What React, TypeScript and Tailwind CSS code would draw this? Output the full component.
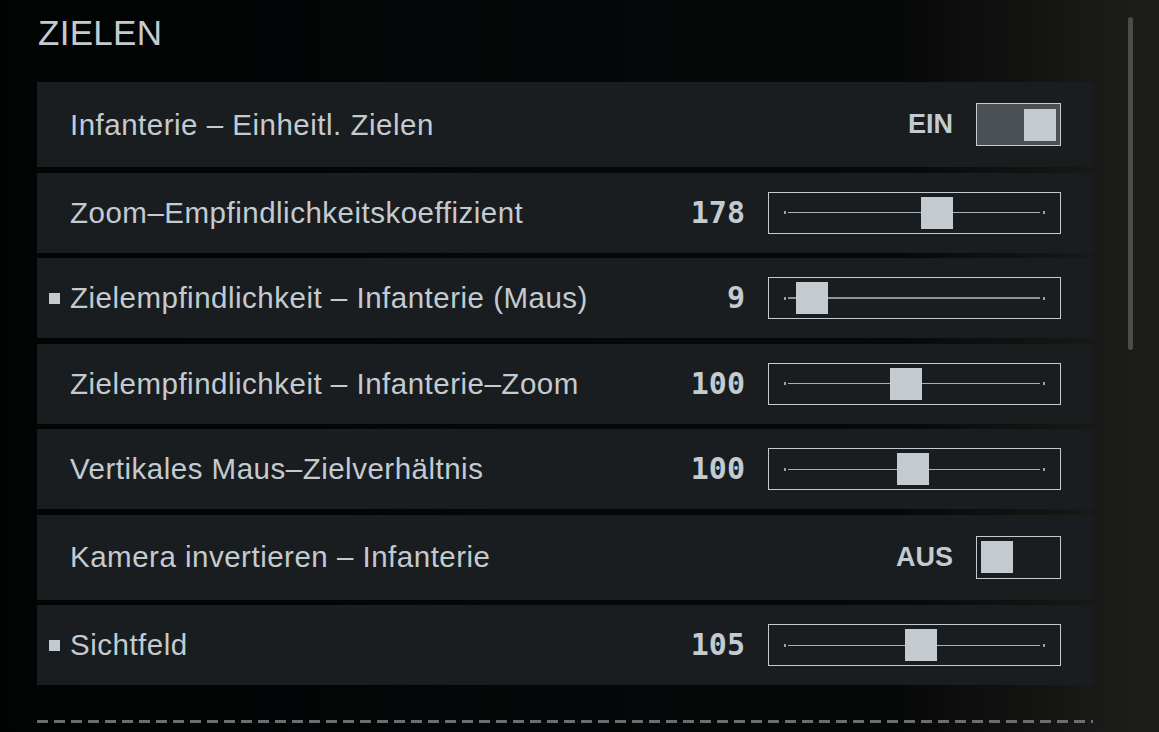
import React from 'react';

type Row =
  | { kind: 'toggle'; label: string; on: boolean; marked?: boolean }
  | { kind: 'slider'; label: string; value: number; thumb: number; marked?: boolean; active?: boolean };

const rows: Row[] = [
  { kind: 'toggle', label: 'Infanterie – Einheitl. Zielen', on: true },
  { kind: 'slider', label: 'Zoom–Empfindlichkeitskoeffizient', value: 178, thumb: 152 },
  { kind: 'slider', label: 'Zielempfindlichkeit – Infanterie (Maus)', value: 9, thumb: 27, marked: true, active: true },
  { kind: 'slider', label: 'Zielempfindlichkeit – Infanterie–Zoom', value: 100, thumb: 121 },
  { kind: 'slider', label: 'Vertikales Maus–Zielverhältnis', value: 100, thumb: 128 },
  { kind: 'toggle', label: 'Kamera invertieren – Infanterie', on: false },
  { kind: 'slider', label: 'Sichtfeld', value: 105, thumb: 136, marked: true },
];

const sans = { fontFamily: '"Liberation Sans", Arial, sans-serif' };

const Toggle: React.FC<{ on: boolean }> = ({ on }) => (
  <div className="flex items-center gap-[23px]">
    <span className="text-[27px] font-bold text-[#c3cbd1] leading-none">{on ? 'EIN' : 'AUS'}</span>
    <div
      className={`flex h-[43px] w-[85px] items-center border border-[#c3cbd1] px-[4px] ${
        on ? 'justify-end bg-[#4a5054]' : 'justify-start'
      }`}
    >
      <div className="h-[32px] w-[32px] bg-[#c3cbd1]" />
    </div>
  </div>
);

const Slider: React.FC<{ value: number; thumb: number; active?: boolean }> = ({ value, thumb, active }) => (
  <div className="flex items-center gap-[23px]">
    <span
      className="text-[30px] font-bold text-[#c3cbd1] leading-none"
      style={{ fontFamily: '"DejaVu Sans Mono", monospace' }}
    >
      {value}
    </span>
    <div className="relative flex h-[42px] w-[293px] items-center border border-[#c3cbd1] pl-[15px]">
      <div className="h-[3px] w-[2px] bg-[#9aa0a4]" />
      <div className={`ml-[2px] w-[252px] ${active ? 'h-[2px] bg-[#8d9397]' : 'h-px bg-[#a9b0b4]'}`} />
      <div className="ml-[3px] h-[3px] w-[2px] bg-[#9aa0a4]" />
      {/* thumb sits over the track */}
      <div className="absolute top-[4px] h-[32px] w-[32px] bg-[#c3cbd1]" style={{ left: thumb }} />
    </div>
  </div>
);

const App: React.FC = () => {
  return (
    <div
      className="relative h-[732px] w-[1159px] overflow-hidden text-[#c3cbd1]"
      style={{
        ...sans,
        background:
          'linear-gradient(90deg, #020303 0%, #050607 45%, #070808 78%, #121311 88%, #1b1b19 96%, #1d1d1b 100%)',
      }}
    >
      <div className="flex w-[1056px] flex-col pl-[37px] pt-[15px] box-content">
        <h1 className="pl-[1px] text-[35px] leading-[35px] tracking-[0.3px] text-[#c3cbd1]">ZIELEN</h1>

        <div className="mt-[32px] flex flex-col gap-[5.5px]">
          {rows.map((row, i) => (
            <div
              key={i}
              className={`flex items-center justify-between bg-[#1a1d20] pl-[12px] pr-[32px] ${
                row.kind === 'toggle' ? 'h-[85px]' : 'h-[80px]'
              }`}
            >
              <div className="flex items-center">
                <div className="flex w-[21px] items-center">
                  {row.marked && <div className="h-[11px] w-[11px] bg-[#c3cbd1]" />}
                </div>
                <span className="text-[29.5px] leading-none tracking-[0.5px] text-[#c3cbd1]">{row.label}</span>
              </div>
              {row.kind === 'toggle' ? (
                <Toggle on={row.on} />
              ) : (
                <Slider value={row.value} thumb={row.thumb} active={row.active} />
              )}
            </div>
          ))}
        </div>

        <div className="mt-[35px] flex w-[1056px] gap-[6px] overflow-hidden">
          {Array.from({ length: 70 }).map((_, i) => (
            <div key={i} className="h-[3px] w-[11px] shrink-0 bg-[#6b6e70]" />
          ))}
        </div>
      </div>

      {/* scrollbar */}
      <div className="absolute left-[1128px] top-[17px] h-[333px] w-[5px] rounded-full bg-[#4b4b4a]" />
    </div>
  );
};

export default App;
